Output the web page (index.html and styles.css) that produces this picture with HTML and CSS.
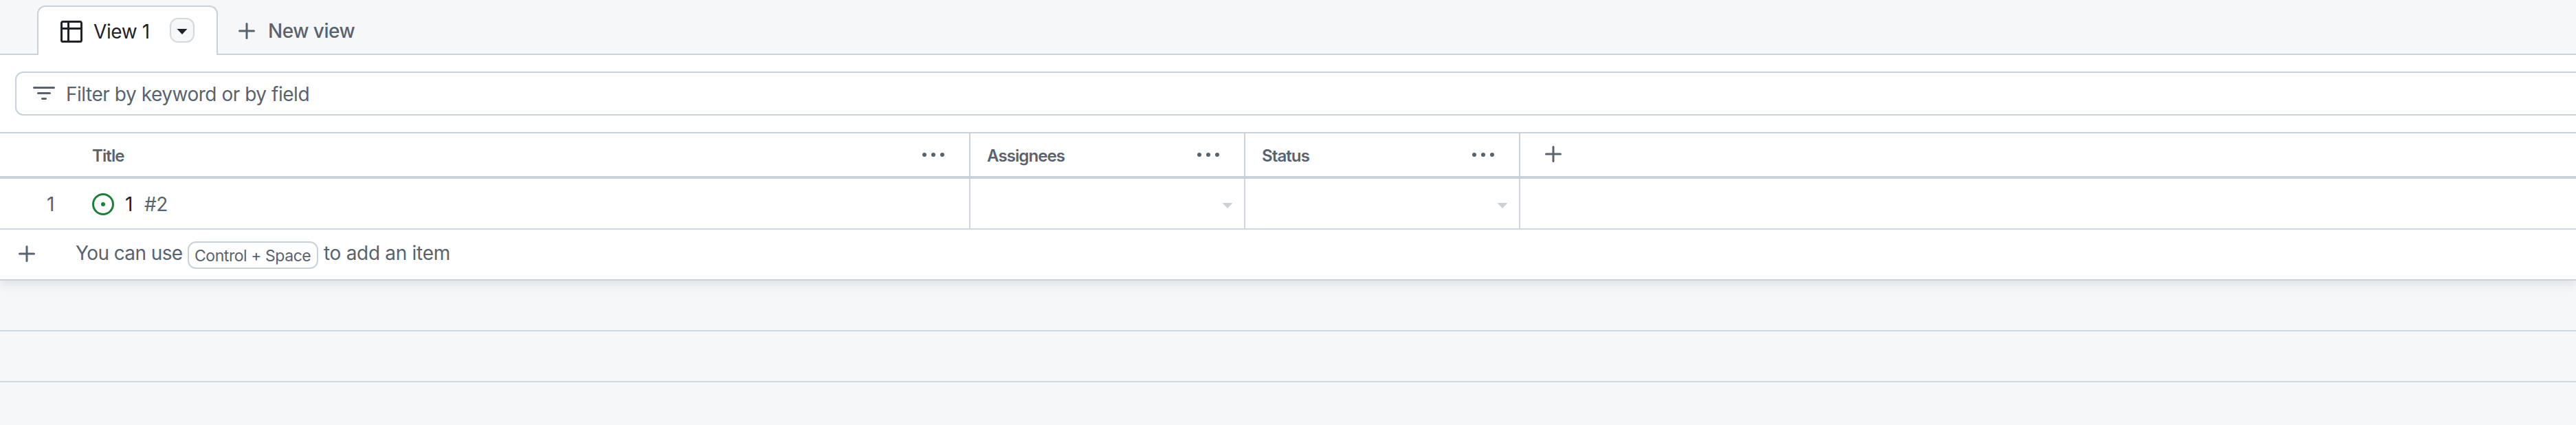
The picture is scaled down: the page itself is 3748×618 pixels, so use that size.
FILE: index.html
```html
<!DOCTYPE html>
<html lang="en">
<head>
<meta charset="utf-8">
<title>View 1</title>
<link rel="stylesheet" href="styles.css">
</head>
<body>
<nav class="tabs">
  <div class="tab">
    <svg class="tab-icon" width="32" height="32" viewBox="0 0 16 16"><path fill="currentColor" d="M0 1.75C0 .784.784 0 1.75 0h12.5C15.216 0 16 .784 16 1.75v12.5A1.75 1.75 0 0 1 14.25 16H1.75A1.75 1.75 0 0 1 0 14.25ZM6.5 6.5v8h7.75a.25.25 0 0 0 .25-.25V6.5Zm8-1.5V1.75a.25.25 0 0 0-.25-.25H6.5V5Zm-13 1.5v7.75c0 .138.112.25.25.25H5v-8ZM5 5V1.5H1.75a.25.25 0 0 0-.25.25V5Z"/></svg>
    <span class="tab-name">View 1</span>
    <button class="tab-menu"><svg width="16" height="8" viewBox="0 0 16 8"><path fill="currentColor" d="M0.5 0H15.5L8 8Z"/></svg></button>
  </div>
  <div class="new-view">
    <svg class="plus" width="24" height="24" viewBox="0 0 24 24"><path d="M12 1.5V22.5M1.5 12H22.5"/></svg>
    <span class="new-label">New view</span>
  </div>
</nav>
<div class="filter-bar">
  <div class="filter">
    <svg width="32" height="20" viewBox="0 0 32 20"><path class="stroke" d="M1.5 1.5H30.5M7.5 9.5H24.5M13.5 17.5H18.5"/></svg>
    <span class="filter-text">Filter by keyword or by field</span>
  </div>
</div>
<main class="grid">
  <div class="row head">
    <div class="cell title"><span class="label">Title</span><svg class="dots" width="34" height="6" viewBox="0 0 34 6"><circle cx="3" cy="3" r="3"/><circle cx="16" cy="3" r="3"/><circle cx="29" cy="3" r="3"/></svg></div>
    <div class="cell field"><span class="label">Assignees</span><svg class="dots" width="34" height="6" viewBox="0 0 34 6"><circle cx="3" cy="3" r="3"/><circle cx="16" cy="3" r="3"/><circle cx="29" cy="3" r="3"/></svg></div>
    <div class="cell field"><span class="label">Status</span><svg class="dots" width="34" height="6" viewBox="0 0 34 6"><circle cx="3" cy="3" r="3"/><circle cx="16" cy="3" r="3"/><circle cx="29" cy="3" r="3"/></svg></div>
    <div class="add-field"><svg class="plus" width="24" height="24" viewBox="0 0 24 24"><path d="M12 1.5V22.5M1.5 12H22.5"/></svg></div>
  </div>
  <div class="row item">
    <div class="cell title">
      <span class="index">1</span>
      <svg class="issue" width="32" height="32" viewBox="0 0 16 16"><path fill="currentColor" d="M8 9.5a1.5 1.5 0 1 0 0-3 1.5 1.5 0 0 0 0 3Z"/><path fill="currentColor" d="M8 0a8 8 0 1 1 0 16A8 8 0 0 1 8 0ZM1.5 8a6.5 6.5 0 1 0 13 0 6.5 6.5 0 0 0-13 0Z"/></svg>
      <span class="name">1</span><span class="number">#2</span>
    </div>
    <div class="cell field"><svg class="caret" width="16" height="8" viewBox="0 0 16 8"><path d="M0.5 0H15.5L8 8Z"/></svg></div>
    <div class="cell field"><svg class="caret" width="16" height="8" viewBox="0 0 16 8"><path d="M0.5 0H15.5L8 8Z"/></svg></div>
  </div>
  <div class="row add">
    <svg class="plus" width="24" height="24" viewBox="0 0 24 24"><path d="M12 1.5V22.5M1.5 12H22.5"/></svg>
    <span class="hint-a">You can use</span><kbd><span class="key">Control + Space</span></kbd><span class="hint-b">to add an item</span>
  </div>
</main>
<div class="empty"></div>
<div class="empty"></div>
</body>
</html>
```
FILE: styles.css
```css
* { box-sizing: border-box; }
body { margin: 0; height: 618px; overflow: hidden; background: #f5f7f9; color: #59636e; font: 28px/36px Inter, "Liberation Sans", sans-serif; }
svg { display: block; flex: none; }
span { white-space: nowrap; }
.plus path, .stroke { fill: none; stroke: currentColor; stroke-width: 3; stroke-linecap: round; }
.tabs { display: flex; height: 80px; padding: 8px 0 0 54px; background: linear-gradient(#c9d1d9, #c9d1d9) 0 78px / 100% 2px no-repeat; }
.tab { display: flex; align-items: center; width: 263px; height: 72px; padding: 2px 0 0 32px; background: #fff; border: 2px solid #c9d1d9; border-bottom: 0; border-radius: 12px 12px 0 0; color: #1f2328; }
.tab-name { width: 127px; padding-left: 16px; letter-spacing: -0.4px; }
.tab-menu { display: flex; align-items: center; justify-content: center; width: 36px; height: 36px; margin: -4px 0 0; padding: 4px 0 0; border: 2px solid #d5d8dc; border-radius: 12px; background: #f5f7f9; color: #1f2328; }
.new-view { display: flex; align-items: center; height: 72px; padding: 2px 0 0 30px; }
.new-view .plus { margin-top: -1px; }
.new-label { padding-left: 19px; font-weight: 500; letter-spacing: -0.5px; }
.filter-bar { height: 112px; padding: 24px 0 0 22px; background: #fff; }
.filter { display: flex; align-items: center; height: 64px; padding-left: 24px; border: 2px solid #c9d1d9; border-right: 0; border-radius: 12px 0 0 12px; }
.filter-text { padding: 2px 0 0 16px; letter-spacing: -0.47px; }
.grid { border-top: 2px solid #c9d1d9; border-bottom: 2px solid #c9d1d9; background: #fff; box-shadow: 0 6px 12px #8c959f33; }
.row { display: flex; }
.head { height: 66px; border-bottom: 4px solid #c9d1d9; font-size: 24px; font-weight: 600; letter-spacing: -0.9px; }
.cell { display: flex; align-items: center; border-right: 2px solid #d0d7de; }
.head .cell { border-color: #c9d1d9; }
.title { width: 1412px; padding-left: 134px; }
.field { width: 400px; padding-left: 24px; }
.label { padding-top: 3px; }
.dots { margin: 0 34px 0 auto; fill: currentColor; }
.add-field { padding: 18px 0 0 36px; }
.item { height: 74px; border-bottom: 2px solid #d0d7de; }
.item .cell { padding-top: 2px; }
.item .title { padding-left: 68px; }
.index { width: 66px; }
.issue { color: #1a7f37; }
.name { width: 28px; margin-left: 16px; color: #1f2328; }
.number { letter-spacing: -0.4px; }
.caret { margin: 4px 16px 0 auto; fill: #cdd1d5; }
.add { align-items: center; height: 72px; padding: 0 0 4px 27px; }
.add .plus { margin-top: 1px; }
.hint-a { width: 163px; margin-left: 59px; letter-spacing: -0.6px; }
kbd { display: flex; align-items: center; width: 190px; height: 40px; margin-top: 6px; padding: 1px 0 0 8px; border: 2px solid #c9d1d9; border-radius: 12px; font: 23px/30px Inter, sans-serif; letter-spacing: -0.45px; }
.hint-b { margin-left: 8px; letter-spacing: -0.3px; }
.empty { height: 74px; border-bottom: 2px solid #d1d9e0; }
```
